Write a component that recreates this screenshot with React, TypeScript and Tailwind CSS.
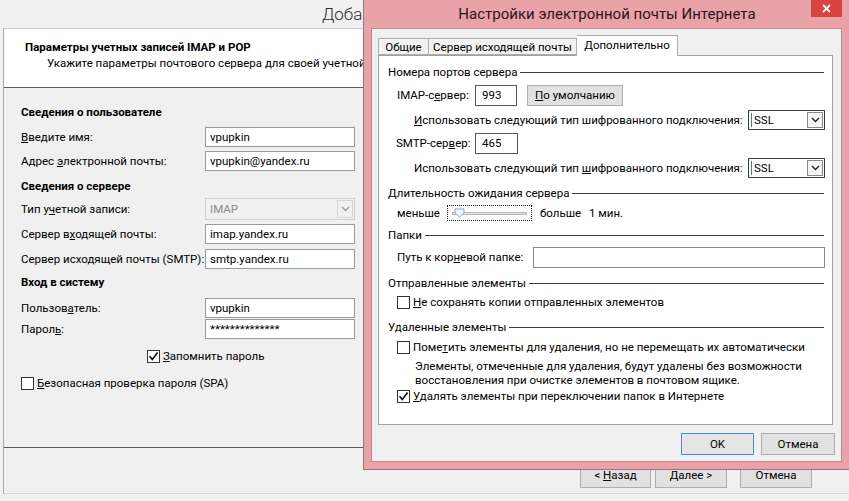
import React from "react";

function Chk({ checked }: { checked?: boolean }) {
  return (
    <div className="w-[13px] h-[13px] border border-[#333333] bg-white flex items-center justify-center shrink-0">
      {checked && (
        <svg width="11" height="11" viewBox="0 0 11 11">
          <path d="M1.5 5.2 L4.3 8.4 L9.6 1.6" stroke="#111" strokeWidth="1.7" fill="none" />
        </svg>
      )}
    </div>
  );
}

function Chevron({ color = "#222" }: { color?: string }) {
  return (
    <svg width="9" height="6" viewBox="0 0 9 6">
      <path d="M1 1 L4.5 4.5 L8 1" stroke={color} strokeWidth="1.4" fill="none" />
    </svg>
  );
}

function LRow({ mt, label, value, disabled }: { mt: string; label: React.ReactNode; value?: string; disabled?: boolean }) {
  return (
    <div className={`h-[14px] flex items-center ${mt}`}>
      <div className="w-[184px] shrink-0 whitespace-nowrap">{label}</div>
      {disabled ? (
        <div className="w-[150px] h-[22px] border border-[#cfcfcf] bg-[#f0f0f0] flex items-center pl-[4px] text-[#8a8a8a]">
          <span className="flex-1">{value}</span>
          <div className="w-[16px] h-[18px] mr-[1px] border border-[#d6d6d6] flex items-center justify-center">
            <Chevron color="#9a9a9a" />
          </div>
        </div>
      ) : (
        <div className="w-[150px] h-[20px] border border-[#9a9a9a] bg-white flex items-center pl-[4px]">{value}</div>
      )}
    </div>
  );
}

function Group({ mt, children }: { mt: string; children: React.ReactNode }) {
  return (
    <div className={`h-[14px] flex items-center pl-[9px] pr-[8px] ${mt}`}>
      <span className="whitespace-nowrap">{children}</span>
      <div className="flex-1 h-px bg-[#3a3a3a] ml-[3px]" />
    </div>
  );
}

function SslSelect() {
  return (
    <div className="w-[77px] h-[20px] border border-[#3c3c3c] bg-white flex items-center ml-auto shrink-0">
      <div className="w-px h-[14px] bg-[#3377cc] ml-[2px]" />
      <span className="flex-1 pl-[2px]">SSL</span>
      <div className="w-[16px] h-[16px] mr-[1px] border border-[#8a8a8a] bg-[#f4f4f4] flex items-center justify-center">
        <Chevron />
      </div>
    </div>
  );
}

function Btn({ className, children }: { className: string; children: React.ReactNode }) {
  return (
    <div className={`h-[25px] border border-[#adadad] bg-[#e1e1e1] flex items-start justify-center pt-[4px] ${className}`}>
      <span className="whitespace-pre">{children}</span>
    </div>
  );
}

export default function App() {
  return (
    <div className="w-[849px] h-[501px] overflow-hidden relative bg-[#f0f0f0] text-[11.5px] leading-[14px] text-black font-['Roboto',sans-serif]">
      {/* Main window */}
      <div className="h-[28px] pl-[322px] text-[17px] leading-[28px] text-[#2a2a2a] font-light whitespace-nowrap">
        Добав
      </div>
      <div className="ml-[3px] border-l border-[#a8a8a8]">
        <div className="h-[60px] bg-white border-t border-[#cccccc] border-b border-b-[#5e5e5e] pl-[21px] pt-[10px]">
          <div className="font-bold leading-[16px] whitespace-nowrap">Параметры учетных записей IMAP и POP</div>
          <div className="pl-[22px] leading-[16px] whitespace-nowrap">
            Укажите параметры почтового сервера для своей учетной за
          </div>
        </div>
        <div className="h-[360px] pl-[17px] pt-[17px] border-b border-[#5a5a5a]">
          <div className="h-[14px] flex items-center font-bold">Сведения о пользователе</div>
          <LRow mt="mt-[11px]" label={<><u>В</u>ведите имя:</>} value="vpupkin" />
          <LRow mt="mt-[10px]" label={<>Адрес <u>э</u>лектронной почты:</>} value="vpupkin@yandex.ru" />
          <div className="h-[14px] flex items-center font-bold mt-[11px]">Сведения о сервере</div>
          <LRow mt="mt-[9px]" label={<>Тип у<u>ч</u>етной записи:</>} value="IMAP" disabled />
          <LRow mt="mt-[11px]" label={<>Сервер в<u>х</u>одящей почты:</>} value="imap.yandex.ru" />
          <LRow mt="mt-[11px]" label={<>Сервер исходящей почты (SMTP):</>} value="smtp.yandex.ru" />
          <div className="h-[14px] flex items-center font-bold mt-[9px]">Вход в систему</div>
          <LRow mt="mt-[12px]" label={<>Пользов<u>а</u>тель:</>} value="vpupkin" />
          <LRow mt="mt-[7px]" label={<>Парол<u>ь</u>:</>} value="**************" />
          <div className="h-[14px] flex items-center mt-[13px] pl-[126px] gap-[3px]">
            <Chk checked />
            <span><u>З</u>апомнить пароль</span>
          </div>
          <div className="h-[14px] flex items-center mt-[13px] gap-[3px]">
            <Chk />
            <span><u>Б</u>езопасная проверка пароля (SPA)</span>
          </div>
        </div>
        <div className="h-[46px] border-b border-[#d8d8d8] flex pt-[15px]">
          <Btn className="ml-[576px] w-[71px]">&lt; <u>Н</u>азад</Btn>
          <Btn className="ml-[4px] w-[72px]"><u>Д</u>алее &gt;</Btn>
          <Btn className="ml-[13px] w-[72px]">Отмена</Btn>
        </div>
      </div>

      {/* Dialog window */}
      <div className="absolute left-[363px] top-0 w-[487px] h-[470px] bg-[#e9a3a8] border-l border-b border-[#a86e73]">
        <div className="h-[28px] relative flex items-center justify-center">
          <span className="text-[15px] text-[#2a1420] whitespace-nowrap">Настройки электронной почты Интернета</span>
          <div className="absolute left-[447px] top-0 w-[31px] h-[17px] bg-[#d9443f] flex items-center justify-center">
            <svg width="9" height="9" viewBox="0 0 9 9">
              <path d="M1 1 L8 8 M8 1 L1 8" stroke="#fff" strokeWidth="1.8" />
            </svg>
          </div>
        </div>
        <div className="ml-[7px] w-[471px] h-[434px] bg-[#f0f0f0] border border-[#c0868b]">
          <div className="pt-[6px] pl-[6px]">
            <div className="flex items-end h-[20px]">
              <div className="w-[50px] h-[17px] border border-[#adadad] border-r-0 bg-[#f2f2f2] flex items-center justify-center">Общие</div>
              <div className="w-[149px] h-[17px] border border-[#adadad] bg-[#f2f2f2] flex items-center justify-center whitespace-nowrap">Сервер исходящей почты</div>
              <div className="w-[101px] h-[21px] -mb-px relative z-10 border border-b-0 border-[#adadad] border-l-0 bg-white flex items-start justify-center pt-[2px] whitespace-nowrap">Дополнительно</div>
            </div>
            <div className="w-[455px] h-[370px] border border-[#a0a0a0] bg-white">
              <Group mt="mt-[9px]">Номера портов сервера</Group>
              <div className="h-[14px] flex items-center pl-[18px] mt-[9px]">
                <span className="w-[78px] shrink-0">IMAP-с<u>е</u>рвер:</span>
                <div className="w-[42px] h-[21px] border border-[#555] flex items-center pl-[6px]">993</div>
                <div className="ml-[10px] w-[96px] h-[21px] border border-[#adadad] bg-[#e1e1e1] flex items-center justify-center">
                  <span><u>П</u>о умолчанию</span>
                </div>
              </div>
              <div className="h-[14px] flex items-center pl-[35px] pr-[7px] mt-[11px]">
                <span className="whitespace-nowrap"><u>И</u>спользовать следующий тип шифрованного подключения:</span>
                <SslSelect />
              </div>
              <div className="h-[14px] flex items-center pl-[17px] mt-[9px]">
                <span className="w-[79px] shrink-0">SMTP-сер<u>в</u>ер:</span>
                <div className="w-[43px] h-[21px] border border-[#555] flex items-center pl-[6px]">465</div>
              </div>
              <div className="h-[14px] flex items-center pl-[35px] pr-[7px] mt-[11px]">
                <span className="whitespace-nowrap">Использовать следующий тип <u>ш</u>ифрованного подключения:</span>
                <SslSelect />
              </div>
              <Group mt="mt-[11px]"><u>Д</u>лительность ожидания сервера</Group>
              <div className="h-[14px] flex items-center pl-[18px] mt-[6px]">
                <span className="w-[50px] shrink-0">меньше</span>
                <div className="w-[85px] h-[16px] border border-dotted border-[#222] flex items-center px-[4px] relative">
                  <div className="flex-1 h-[3px] border border-[#b5b5b5] bg-[#e7e7e7]" />
                  <svg className="absolute left-[6px] top-[2px]" width="11" height="10" viewBox="0 0 11 10">
                    <path d="M1 1 H10 V5 L5.5 9 L1 5 Z" fill="#f4f8fc" stroke="#7aa6d6" strokeWidth="1" />
                  </svg>
                </div>
                <span className="ml-[8px] w-[49px] shrink-0">больше</span>
                <span>1 мин.</span>
              </div>
              <Group mt="mt-[8px]">Папки</Group>
              <div className="h-[14px] flex items-center pl-[18px] mt-[8px]">
                <span className="w-[136px] shrink-0 whitespace-nowrap">Путь к кор<u>н</u>евой папке:</span>
                <div className="w-[292px] h-[21px] border border-[#8a8a8a] bg-white" />
              </div>
              <Group mt="mt-[12px]">Отправленные элементы</Group>
              <div className="h-[14px] flex items-center pl-[18px] gap-[3px] mt-[5px]">
                <Chk />
                <span><u>Н</u>е сохранять копии отправленных элементов</span>
              </div>
              <Group mt="mt-[11px]">Удаленные элементы</Group>
              <div className="h-[14px] flex items-center pl-[18px] gap-[3px] mt-[6px]">
                <Chk />
                <span className="whitespace-nowrap">Поме<u>т</u>ить элементы для удаления, но не перемещать их автоматически</span>
              </div>
              <div className="pl-[36px] mt-[5px] leading-[14px] whitespace-nowrap">
                <div className="h-[14px]">Элементы, отмеченные для удаления, будут удалены без возможности</div>
                <div className="h-[14px]">восстановления при очистке элементов в почтовом ящике.</div>
              </div>
              <div className="h-[14px] flex items-center pl-[18px] gap-[3px] mt-[2px]">
                <Chk checked />
                <span><u>У</u>далять элементы при переключении папок в Интернете</span>
              </div>
            </div>
          </div>
          <div className="flex justify-end pr-[6px] gap-[7px] mt-[8px]">
            <div className="w-[73px] h-[22px] border border-[#3c8ee0] bg-[#e5e5e5] flex items-center justify-center">OK</div>
            <div className="w-[74px] h-[22px] border border-[#adadad] bg-[#e1e1e1] flex items-center justify-center">Отмена</div>
          </div>
        </div>
      </div>
    </div>
  );
}
